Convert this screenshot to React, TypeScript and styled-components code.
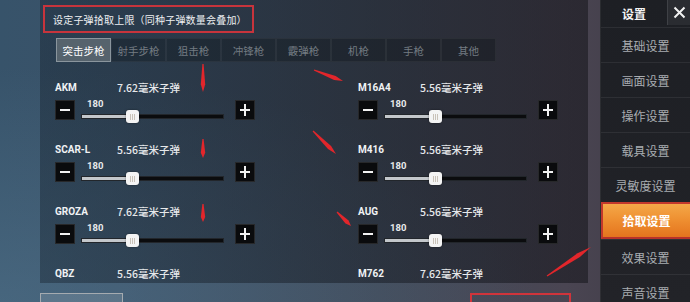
import styled, { createGlobalStyle } from 'styled-components';
import { useState } from 'react';

const GlobalStyles = createGlobalStyle`
  html, body {
    margin: 0;
    padding: 0;
    width: 690px;
    height: 302px;
    overflow: hidden;
    background: #2f3c49;
  }
  body {
    font-family: 'Noto Sans CJK SC', 'Noto Sans', sans-serif;
    color: #e8eaec;
  }
  * {
    box-sizing: border-box;
  }
`;

type Weapon = { name: string; ammo: string; value: number };

const leftWeapons: Weapon[] = [
  { name: 'AKM', ammo: '7.62毫米子弹', value: 180 },
  { name: 'SCAR-L', ammo: '5.56毫米子弹', value: 180 },
  { name: 'GROZA', ammo: '7.62毫米子弹', value: 180 },
  { name: 'QBZ', ammo: '5.56毫米子弹', value: 180 },
];

const rightWeapons: Weapon[] = [
  { name: 'M16A4', ammo: '5.56毫米子弹', value: 180 },
  { name: 'M416', ammo: '5.56毫米子弹', value: 180 },
  { name: 'AUG', ammo: '5.56毫米子弹', value: 180 },
  { name: 'M762', ammo: '7.62毫米子弹', value: 180 },
];

const tabs = ['突击步枪', '射手步枪', '狙击枪', '冲锋枪', '霰弹枪', '机枪', '手枪', '其他'];

const menu = ['基础设置', '画面设置', '操作设置', '载具设置', '灵敏度设置', '拾取设置', '效果设置', '声音设置'];

const MAX_AMMO = 500;

// red annotation strokes drawn over the screenshot: [x1, y1, x2, y2]
const marks: [number, number, number, number][] = [
  [203, 64, 203, 92],
  [203, 139, 203, 158],
  [203, 204, 203, 222],
  [314, 70, 343, 81],
  [313, 131, 336, 154],
  [337, 212, 351, 226],
  [547, 276, 591, 247],
];

const Screen = styled.div`
  position: relative;
  display: flex;
  width: 690px;
  height: 302px;
  overflow: hidden;
  background:
    radial-gradient(ellipse at 0% 100%, rgba(90, 125, 150, 0.45), transparent 55%),
    linear-gradient(90deg, #37536a 0%, #3b5268 18%, #414a59 55%, #4a4552 82%, #3e3a44 100%);
`;

const Main = styled.div`
  display: flex;
  flex-direction: column;
  flex-shrink: 0;
  width: 588px;
  padding-left: 40px;
`;

const Panel = styled.div`
  flex-shrink: 0;
  height: 283px;
  overflow: hidden;
  background: linear-gradient(90deg, rgba(22, 34, 46, 0.42) 0%, rgba(20, 24, 32, 0.5) 60%, rgba(22, 22, 28, 0.58) 100%);
`;

const Notice = styled.div`
  display: flex;
  align-items: center;
  width: 211px;
  height: 28px;
  margin: 5px 0 0 3px;
  padding-left: 8px;
  border: 2px solid #c7343c;
  font-size: 10px;
  letter-spacing: 0.2px;
  color: #eef0f2;
`;

const TabBar = styled.div`
  display: flex;
  margin: 5px 0 0 16px;
  height: 24px;
`;

const Tab = styled.div<{ $active: boolean }>`
  display: flex;
  align-items: center;
  justify-content: center;
  width: 55px;
  height: 24px;
  font-size: 10.5px;
  color: ${(p) => (p.$active ? '#ffffff' : '#737b82')};
  background: ${(p) => (p.$active ? '#56636d' : 'rgba(10, 14, 20, 0.32)')};
  border: 1px solid ${(p) => (p.$active ? '#8a959d' : 'rgba(255, 255, 255, 0.05)')};
`;

const WeaponGrid = styled.div`
  display: grid;
  grid-template-columns: 303px 1fr;
  margin-top: 19px;
  padding-left: 15px;
`;

const Column = styled.div`
  display: flex;
  flex-direction: column;
`;

const Row = styled.div`
  flex-shrink: 0;
  height: 62px;
`;

const NameLine = styled.div`
  display: flex;
  height: 14px;
  line-height: 14px;
`;

const Name = styled.span`
  width: 62px;
  font-family: Roboto, 'Liberation Sans', sans-serif;
  font-weight: 700;
  font-size: 10px;
  color: #f0f2f4;
`;

const Ammo = styled.span`
  font-size: 10.5px;
  font-weight: 500;
  color: #e6e8ea;
`;

const ControlLine = styled.div`
  display: flex;
  align-items: flex-start;
  margin-top: 5px;
  height: 21px;
`;

const StepButton = styled.div<{ $plus?: boolean }>`
  position: relative;
  width: 20px;
  height: 20px;
  background: #0a0b0d;
  border: 1px solid rgba(255, 255, 255, 0.12);

  &::before,
  &::after {
    content: '';
    position: absolute;
    background: #f2f2f2;
  }
  &::before {
    left: 4px;
    right: 4px;
    top: 8px;
    height: 2px;
  }
  &::after {
    display: ${(p) => (p.$plus ? 'block' : 'none')};
    top: 3px;
    bottom: 3px;
    left: 8px;
    width: 2px;
  }
`;

const Slider = styled.div`
  display: flex;
  flex-direction: column;
  width: 143px;
  margin: -2px 11px 0 6px;
`;

const SliderValue = styled.div`
  height: 12px;
  line-height: 12px;
  padding-left: 6px;
  font-family: Roboto, 'Liberation Sans', sans-serif;
  font-weight: 700;
  font-size: 9.5px;
  color: #e8eaec;
`;

const TrackZone = styled.div`
  position: relative;
  display: flex;
  align-items: center;
  height: 13px;
`;

const Track = styled.div`
  display: flex;
  width: 100%;
  height: 5px;
  background: #0b0c0e;
  border: 1px solid #22262b;
`;

const Fill = styled.div`
  height: 100%;
  background: #c3c7cb;
`;

const Thumb = styled.div`
  position: absolute;
  top: 0;
  display: flex;
  align-items: center;
  justify-content: center;
  gap: 1px;
  width: 13px;
  height: 13px;
  margin-left: -6px;
  border-radius: 3px;
  background: #f4f4f4;
  box-shadow: 0 0 2px rgba(0, 0, 0, 0.5);
`;

const Groove = styled.span`
  width: 1px;
  height: 6px;
  background: #c9c2b8;
`;

const Footer = styled.div`
  display: flex;
  flex-shrink: 0;
  margin-top: 10px;
`;

const GhostButton = styled.div`
  width: 83px;
  height: 24px;
  border: 1px solid #a5abb0;
  background: rgba(255, 255, 255, 0.12);
`;

const ResetButton = styled.div`
  width: 101px;
  height: 24px;
  margin-left: 347px;
  padding-top: 5px;
  border: 2px solid #d0343b;
  text-align: center;
  font-size: 11px;
  line-height: 14px;
  color: #e35a5f;
`;

const Sidebar = styled.div`
  display: flex;
  flex-direction: column;
  width: 90px;
  margin-left: 12px;
  background: linear-gradient(180deg, #1d1f24 0%, #222328 100%);
  border-left: 1px solid rgba(255, 255, 255, 0.06);
`;

const SideHeader = styled.div`
  display: flex;
  flex-shrink: 0;
  height: 27px;
`;

const SideTitle = styled.div`
  flex: 1;
  display: flex;
  align-items: center;
  justify-content: center;
  padding-bottom: 1px;
  font-size: 12px;
  font-weight: 700;
  color: #f4f4f4;
`;

const CloseButton = styled.div`
  display: flex;
  align-items: center;
  justify-content: center;
  width: 23px;
  height: 25px;
  background: #2a2c31;
  border-left: 1px solid rgba(255, 255, 255, 0.1);
`;

const MenuItem = styled.div<{ $active: boolean }>`
  display: flex;
  align-items: center;
  justify-content: center;
  flex-shrink: 0;
  font-size: 12px;
  font-weight: ${(p) => (p.$active ? 700 : 400)};
  color: ${(p) => (p.$active ? '#ffffff' : '#a9adb1')};
  border-top: ${(p) => (p.$active ? '2px solid #c2382c' : '1px solid rgba(255, 255, 255, 0.07)')};
  border-bottom: ${(p) => (p.$active ? '2px solid #b8322a' : 'none')};
  border-left: ${(p) => (p.$active ? '2px solid #c2382c' : 'none')};
  height: ${(p) => (p.$active ? '37px' : '35px')};
  background: ${(p) =>
    p.$active ? 'linear-gradient(180deg, #f4a848 0%, #ee8e30 50%, #e4741e 100%)' : 'transparent'};
`;

const Annotations = styled.svg`
  position: absolute;
  left: 0;
  top: 0;
  pointer-events: none;
`;

function markPoints([x1, y1, x2, y2]: [number, number, number, number]) {
  const len = Math.hypot(x2 - x1, y2 - y1);
  const dx = (x2 - x1) / len;
  const dy = (y2 - y1) / len;
  const nx = -dy;
  const ny = dx;
  const bx = x1 + dx * len * 0.72;
  const by = y1 + dy * len * 0.72;
  const pts = [
    [x1 + nx * 0.6, y1 + ny * 0.6],
    [bx + nx * 2.2, by + ny * 2.2],
    [x2, y2],
    [bx - nx * 2.2, by - ny * 2.2],
    [x1 - nx * 0.6, y1 - ny * 0.6],
  ];
  return pts.map((p) => p.map((v) => v.toFixed(1)).join(',')).join(' ');
}

function WeaponRow({ weapon }: { weapon: Weapon }) {
  const pct = (weapon.value / MAX_AMMO) * 100;
  return (
    <Row>
      <NameLine>
        <Name>{weapon.name}</Name>
        <Ammo>{weapon.ammo}</Ammo>
      </NameLine>
      <ControlLine>
        <StepButton />
        <Slider>
          <SliderValue>{weapon.value}</SliderValue>
          <TrackZone>
            <Track>
              <Fill style={{ width: `${pct}%` }} />
            </Track>
            <Thumb style={{ left: `${pct}%` }}>
              <Groove />
              <Groove />
              <Groove />
            </Thumb>
          </TrackZone>
        </Slider>
        <StepButton $plus />
      </ControlLine>
    </Row>
  );
}

export default function App() {
  const [activeTab, setActiveTab] = useState(0);
  const [activeMenu, setActiveMenu] = useState(5);

  return (
    <>
      <GlobalStyles />
      <Screen>
        <Main>
          <Panel>
            <Notice>设定子弹拾取上限（同种子弹数量会叠加）</Notice>
            <TabBar>
              {tabs.map((tab, index) => (
                <Tab key={tab} $active={activeTab === index} onClick={() => setActiveTab(index)}>
                  {tab}
                </Tab>
              ))}
            </TabBar>
            <WeaponGrid>
              <Column>
                {leftWeapons.map((w) => (
                  <WeaponRow key={w.name} weapon={w} />
                ))}
              </Column>
              <Column>
                {rightWeapons.map((w) => (
                  <WeaponRow key={w.name} weapon={w} />
                ))}
              </Column>
            </WeaponGrid>
          </Panel>
          <Footer>
            <GhostButton />
            <ResetButton>恢复默认设置</ResetButton>
          </Footer>
        </Main>
        <Sidebar>
          <SideHeader>
            <SideTitle>设置</SideTitle>
            <CloseButton>
              <svg width="13" height="13" viewBox="0 0 13 13">
                <path d="M1.5 1.5 L11.5 11.5 M11.5 1.5 L1.5 11.5" stroke="#f2f2f2" strokeWidth="2" />
              </svg>
            </CloseButton>
          </SideHeader>
          {menu.map((item, index) => (
            <MenuItem key={item} $active={activeMenu === index} onClick={() => setActiveMenu(index)}>
              {item}
            </MenuItem>
          ))}
        </Sidebar>
        <Annotations width="690" height="302" viewBox="0 0 690 302">
          {marks.map((m, i) => (
            <polygon key={i} points={markPoints(m)} fill="#e2262b" />
          ))}
        </Annotations>
      </Screen>
    </>
  );
}
